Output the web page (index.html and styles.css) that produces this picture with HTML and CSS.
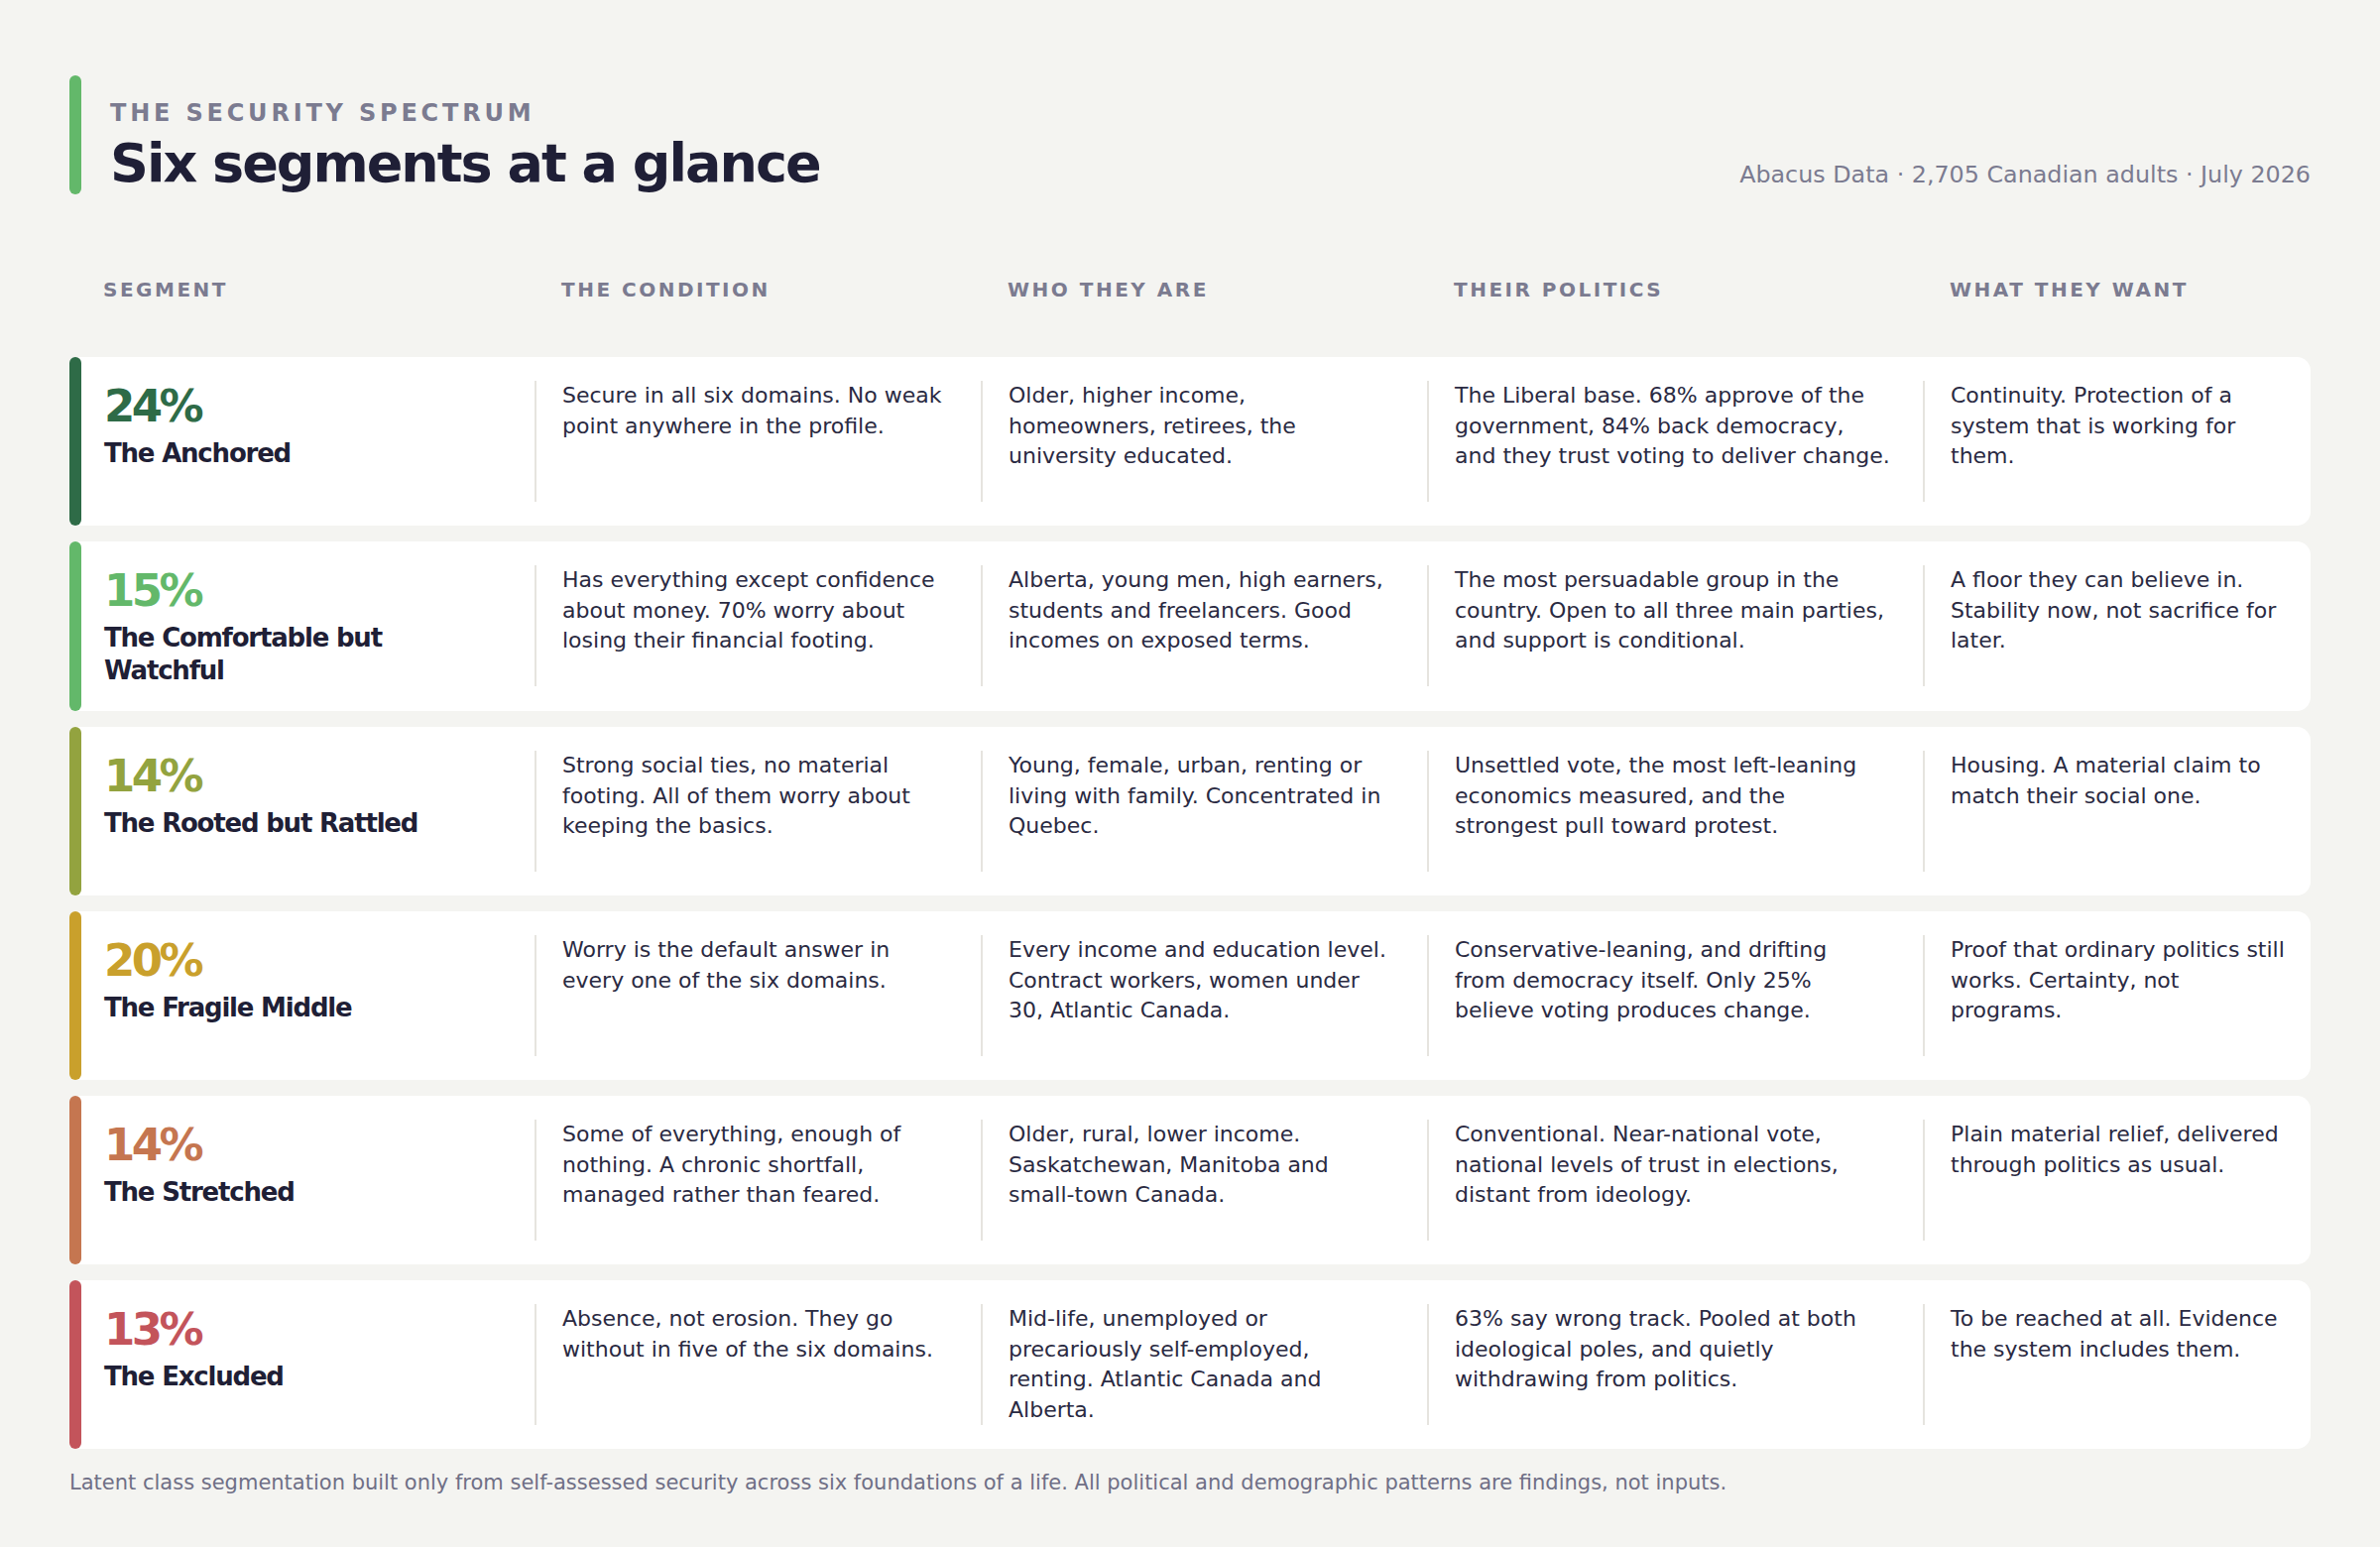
FILE: index.html
```html
<!DOCTYPE html>
<html lang="en">
<head>
<meta charset="utf-8">
<title>The Security Spectrum — Six segments at a glance</title>
<link rel="stylesheet" href="styles.css">
</head>
<body>
<div class="page">
  <header class="hero">
    <div class="hero-bar"></div>
    <div class="hero-text">
      <div class="eyebrow">The Security Spectrum</div>
      <h1 class="title">Six segments at a glance</h1>
    </div>
    <div class="meta">Abacus Data · 2,705 Canadian adults · July 2026</div>
  </header>

  <div class="thead">
    <div></div>
    <div class="th th-seg">Segment</div>
    <div class="th">The condition</div>
    <div class="th">Who they are</div>
    <div class="th">Their politics</div>
    <div class="th">What they want</div>
  </div>

  <div class="rows">
    <div class="row anchored">
      <div class="bar"></div>
      <div class="seg"><div class="pct">24%</div><div class="name">The Anchored</div></div>
      <div class="cell"><p>Secure in all six domains. No weak<br>point anywhere in the profile.</p></div>
      <div class="cell"><p>Older, higher income,<br>homeowners, retirees, the<br>university educated.</p></div>
      <div class="cell"><p>The Liberal base. 68% approve of the<br>government, 84% back democracy,<br>and they trust voting to deliver change.</p></div>
      <div class="cell"><p>Continuity. Protection of a<br>system that is working for<br>them.</p></div>
    </div>

    <div class="row comfortable">
      <div class="bar"></div>
      <div class="seg"><div class="pct">15%</div><div class="name">The Comfortable but<br>Watchful</div></div>
      <div class="cell"><p>Has everything except confidence<br>about money. 70% worry about<br>losing their financial footing.</p></div>
      <div class="cell"><p>Alberta, young men, high earners,<br>students and freelancers. Good<br>incomes on exposed terms.</p></div>
      <div class="cell"><p>The most persuadable group in the<br>country. Open to all three main parties,<br>and support is conditional.</p></div>
      <div class="cell"><p>A floor they can believe in.<br>Stability now, not sacrifice for<br>later.</p></div>
    </div>

    <div class="row rooted">
      <div class="bar"></div>
      <div class="seg"><div class="pct">14%</div><div class="name">The Rooted but Rattled</div></div>
      <div class="cell"><p>Strong social ties, no material<br>footing. All of them worry about<br>keeping the basics.</p></div>
      <div class="cell"><p>Young, female, urban, renting or<br>living with family. Concentrated in<br>Quebec.</p></div>
      <div class="cell"><p>Unsettled vote, the most left-leaning<br>economics measured, and the<br>strongest pull toward protest.</p></div>
      <div class="cell"><p>Housing. A material claim to<br>match their social one.</p></div>
    </div>

    <div class="row fragile">
      <div class="bar"></div>
      <div class="seg"><div class="pct">20%</div><div class="name">The Fragile Middle</div></div>
      <div class="cell"><p>Worry is the default answer in<br>every one of the six domains.</p></div>
      <div class="cell"><p>Every income and education level.<br>Contract workers, women under<br>30, Atlantic Canada.</p></div>
      <div class="cell"><p>Conservative-leaning, and drifting<br>from democracy itself. Only 25%<br>believe voting produces change.</p></div>
      <div class="cell"><p>Proof that ordinary politics still<br>works. Certainty, not<br>programs.</p></div>
    </div>

    <div class="row stretched">
      <div class="bar"></div>
      <div class="seg"><div class="pct">14%</div><div class="name">The Stretched</div></div>
      <div class="cell"><p>Some of everything, enough of<br>nothing. A chronic shortfall,<br>managed rather than feared.</p></div>
      <div class="cell"><p>Older, rural, lower income.<br>Saskatchewan, Manitoba and<br>small-town Canada.</p></div>
      <div class="cell"><p>Conventional. Near-national vote,<br>national levels of trust in elections,<br>distant from ideology.</p></div>
      <div class="cell"><p>Plain material relief, delivered<br>through politics as usual.</p></div>
    </div>

    <div class="row excluded">
      <div class="bar"></div>
      <div class="seg"><div class="pct">13%</div><div class="name">The Excluded</div></div>
      <div class="cell"><p>Absence, not erosion. They go<br>without in five of the six domains.</p></div>
      <div class="cell"><p>Mid-life, unemployed or<br>precariously self-employed,<br>renting. Atlantic Canada and<br>Alberta.</p></div>
      <div class="cell"><p>63% say wrong track. Pooled at both<br>ideological poles, and quietly<br>withdrawing from politics.</p></div>
      <div class="cell"><p>To be reached at all. Evidence<br>the system includes them.</p></div>
    </div>
  </div>

  <p class="note">Latent class segmentation built only from self-assessed security across six foundations of a life. All political and demographic patterns are findings, not inputs.</p>
</div>
</body>
</html>
```

FILE: styles.css
```css
* { box-sizing: border-box; }

html, body {
  margin: 0;
  background: #f4f4f1;
}

body {
  font-family: "DejaVu Sans", "Noto Sans", sans-serif;
  color: #2a2a42;
}

.page {
  padding: 76px 70px 0;
}

/* ---------- header ---------- */
.hero {
  display: flex;
  align-items: flex-end;
}

.hero-bar {
  width: 12px;
  align-self: stretch;
  border-radius: 6px;
  background: #63b86a;
  flex: none;
}

.hero-text {
  padding: 23px 0 0 29px;
}

.eyebrow {
  font-size: 24px;
  line-height: 30px;
  font-weight: 700;
  letter-spacing: 3.8px;
  text-transform: uppercase;
  color: #7b7b90;
}

.title {
  margin: 4px 0 0;
  font-size: 54px;
  line-height: 63px;
  font-weight: 700;
  letter-spacing: -2px;
  color: #1f1f36;
}

.meta {
  margin: 0 0 6px auto;
  font-size: 23.8px;
  line-height: 28px;
  color: #7b7b90;
}

/* ---------- table ---------- */
.thead,
.row {
  display: grid;
  grid-template-columns: 12px 457fr 450fr 450fr 500fr 391fr;
}

.thead {
  margin: 84px 0 56px;
}

.th {
  padding-left: 27px;
  font-size: 20px;
  line-height: 24px;
  font-weight: 700;
  letter-spacing: 2.5px;
  text-transform: uppercase;
  color: #7b7b90;
}

.th-seg {
  padding-left: 22px;
}

.rows {
  display: flex;
  flex-direction: column;
  gap: 16px;
}

.row {
  background: #ffffff;
  border-radius: 6px 14px 14px 6px;
}

.bar {
  background: var(--c);
  border-radius: 6px;
}

.seg {
  padding: 24px 20px 24px 23px;
}

.pct {
  margin-top: 2px;
  font-size: 45px;
  line-height: 48px;
  font-weight: 700;
  letter-spacing: -3.5px;
  color: var(--c);
}

.name {
  margin-top: 7px;
  font-size: 26px;
  line-height: 33px;
  font-weight: 700;
  letter-spacing: -1.2px;
  color: #1f1f36;
}

.cell {
  padding: 24px 0;
}

.cell p {
  margin: 0;
  min-height: 122px;
  padding-left: 26px;
  border-left: 2px solid #e6e4df;
  font-size: 22px;
  line-height: 30.5px;
  white-space: nowrap;
  color: #2a2a42;
}

.anchored    { --c: #2e6b47; }
.comfortable { --c: #63b86a; }
.rooted      { --c: #93a33f; }
.fragile     { --c: #c9a02c; }
.stretched   { --c: #c57650; }
.excluded    { --c: #c3545b; }

/* ---------- footnote ---------- */
.note {
  margin: 22px 0 0;
  font-size: 21px;
  line-height: 25px;
  color: #6f6f86;
}
```
